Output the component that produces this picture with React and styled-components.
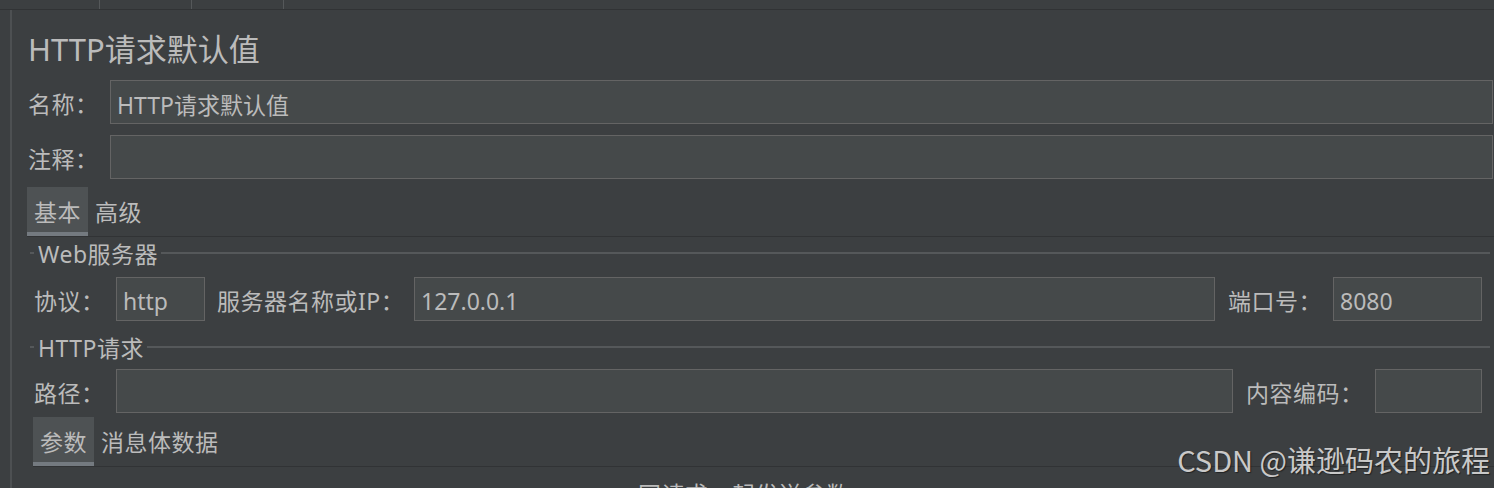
import React from "react";
import styled, { createGlobalStyle } from "styled-components";

const colors = {
  bg: "#3c3f41",
  text: "#bbbbbb",
  field: "#45494a",
  fieldBorder: "#646464",
  line: "#55585a",
  dark: "#313335",
  tabActive: "#4e5254",
  tabUnderline: "#747a80"
};

const GlobalStyle = createGlobalStyle`
  html, body {
    margin: 0;
    padding: 0;
    background: ${colors.bg};
    overflow: hidden;
  }
  body {
    font-family: "Noto Sans", "Noto Sans CJK SC", sans-serif;
    color: ${colors.text};
  }
`;

export default function App() {
  return (
    <>
      <GlobalStyle />
      <Page>
        <TopStrip>
          <StripTab $width={100} />
          <StripTab $width={92} />
          <StripTab $width={92} />
        </TopStrip>
        <Body>
          <Panel>
            <Title>HTTP请求默认值</Title>
            <FieldRow $top={11}>
              <Label $width={82}>名称：</Label>
              <Field readOnly defaultValue="HTTP请求默认值" />
            </FieldRow>
            <FieldRow $top={11}>
              <Label $width={82}>注释：</Label>
              <Field readOnly defaultValue="" />
            </FieldRow>
            <TabBar $top={8} $left={-1}>
              <Tab $active>基本</Tab>
              <Tab>高级</Tab>
            </TabBar>
            <Section>
              <SectionHeader $top={6}>
                <Tick />
                <SectionTitle>Web服务器</SectionTitle>
                <Rule />
              </SectionHeader>
              <FieldRow $top={14} $inset>
                <Label $width={82}>协议：</Label>
                <Field readOnly defaultValue="http" $width={89} />
                <Label $width={197} $gap={12}>服务器名称或IP：</Label>
                <Field readOnly defaultValue="127.0.0.1" />
                <Label $width={105} $gap={13}>端口号：</Label>
                <Field readOnly defaultValue="8080" $width={149} />
              </FieldRow>
              <SectionHeader $top={16}>
                <Tick />
                <SectionTitle>HTTP请求</SectionTitle>
                <Rule />
              </SectionHeader>
              <FieldRow $top={12} $inset>
                <Label $width={82}>路径：</Label>
                <Field readOnly defaultValue="" />
                <Label $width={129} $gap={13}>内容编码：</Label>
                <Field readOnly defaultValue="" $width={107} />
              </FieldRow>
              <TabBar $top={4} $left={3}>
                <Tab $active>参数</Tab>
                <Tab>消息体数据</Tab>
              </TabBar>
              <Caption>同请求一起发送参数:</Caption>
            </Section>
          </Panel>
        </Body>
        <Watermark>CSDN @谦逊码农的旅程</Watermark>
      </Page>
    </>
  );
}

const Page = styled.div`
  position: relative;
  height: 488px;
  overflow: hidden;
`;

const TopStrip = styled.div`
  display: flex;
  height: 9px;
  border-bottom: 1px solid ${colors.dark};
`;

const StripTab = styled.div`
  width: ${p => p.$width}px;
  height: 9px;
  border-right: 1px solid ${colors.line};
  box-sizing: border-box;
`;

const Body = styled.div`
  display: flex;
  padding-left: 10px;
  height: 478px;
`;

const Panel = styled.div`
  flex: 1;
  min-width: 0;
  border-left: 2px solid #4d5052;
  padding: 0 1px 0 16px;
  display: flex;
  flex-direction: column;
`;

const Title = styled.div`
  margin-top: 19px;
  height: 40px;
  line-height: 40px;
  font-size: 31px;
  white-space: nowrap;
`;

const FieldRow = styled.div`
  display: flex;
  align-items: center;
  height: 44px;
  flex-shrink: 0;
  margin-top: ${p => p.$top}px;
  padding-left: ${p => (p.$inset ? 4 : 0)}px;
  padding-right: ${p => (p.$inset ? 8 : 0)}px;
`;

const Label = styled.span`
  flex: 0 0 ${p => p.$width}px;
  margin-left: ${p => p.$gap || 0}px;
  padding-top: 3px;
  font-size: 23px;
  line-height: 30px;
  letter-spacing: 0.5px;
  white-space: nowrap;
`;

const Field = styled.input`
  flex: ${p => (p.$width ? `0 0 ${p.$width}px` : "1 1 0")};
  min-width: 0;
  height: 44px;
  box-sizing: border-box;
  margin: 0;
  padding: 3px 0 0 6px;
  background: ${colors.field};
  border: 1px solid ${colors.fieldBorder};
  border-radius: 0;
  color: ${colors.text};
  font-family: "Noto Sans", "Noto Sans CJK SC", sans-serif;
  font-size: 23px;
  outline: none;
`;

const TabBar = styled.div`
  display: flex;
  flex-shrink: 0;
  margin-top: ${p => p.$top}px;
  margin-left: ${p => p.$left}px;
  margin-right: -6px;
  border-bottom: 1px solid ${colors.dark};
`;

const Tab = styled.div`
  height: 49px;
  box-sizing: border-box;
  padding: 3px 7px 0;
  font-size: 23px;
  line-height: 44px;
  letter-spacing: 0.5px;
  white-space: nowrap;
  background: ${p => (p.$active ? colors.tabActive : "transparent")};
  border-bottom: 4px solid ${p => (p.$active ? colors.tabUnderline : "transparent")};
`;

const Section = styled.div`
  display: flex;
  flex-direction: column;
  margin-left: 2px;
  margin-right: 3px;
`;

const SectionHeader = styled.div`
  display: flex;
  align-items: center;
  height: 20px;
  margin-top: ${p => p.$top}px;
`;

const Tick = styled.div`
  width: 4px;
  height: 2px;
  background: ${colors.line};
`;

const SectionTitle = styled.span`
  margin: 0 3px 0 4px;
  padding-top: 2px;
  font-size: 23px;
  line-height: 20px;
  letter-spacing: 0.5px;
  white-space: nowrap;
`;

const Rule = styled.div`
  flex: 1;
  height: 2px;
  background: ${colors.line};
`;

const Caption = styled.div`
  margin-top: 12px;
  padding-right: 26px;
  text-align: center;
  font-size: 23px;
  line-height: 30px;
  letter-spacing: 0.5px;
  white-space: nowrap;
`;

const Watermark = styled.div`
  position: absolute;
  right: 4px;
  top: 441px;
  font-family: "Noto Sans CJK SC", sans-serif;
  font-size: 29px;
  line-height: 36px;
  color: #c9c9c9;
  text-shadow: 1px 1px 1px rgba(0, 0, 0, 0.45);
  white-space: nowrap;
  pointer-events: none;
`;
